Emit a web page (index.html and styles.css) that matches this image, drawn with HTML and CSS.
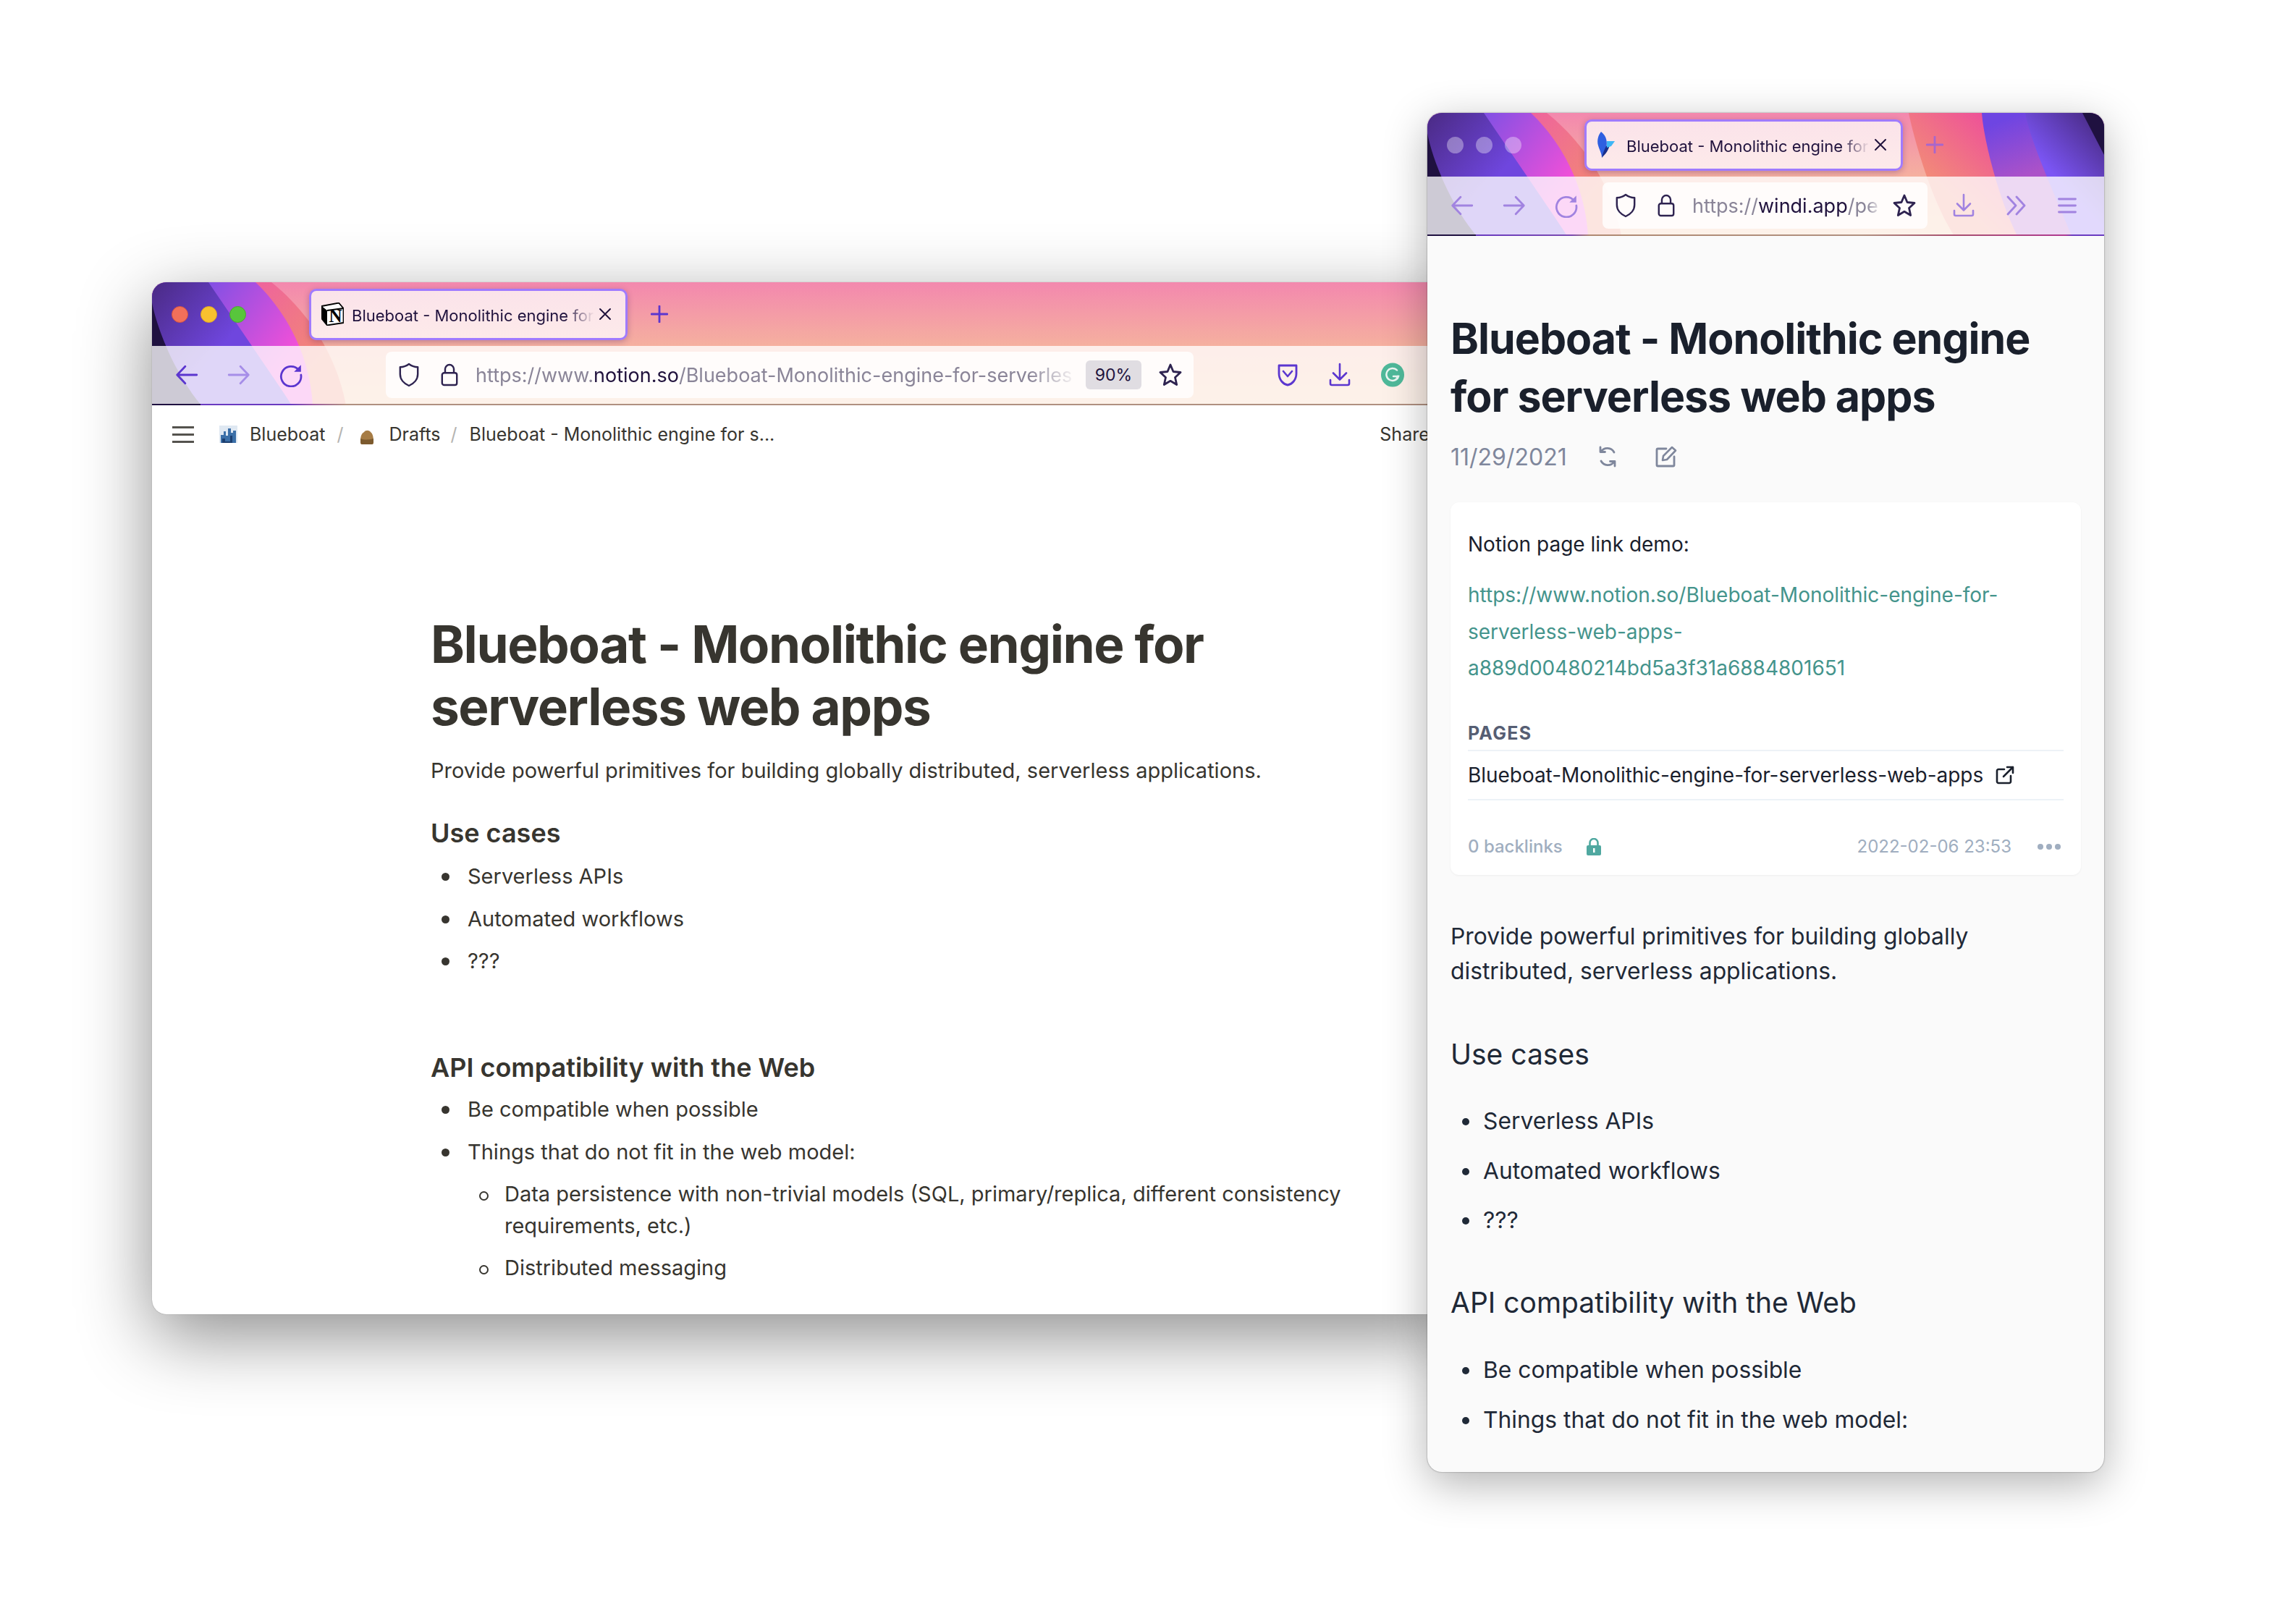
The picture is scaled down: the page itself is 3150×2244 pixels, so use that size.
FILE: index.html
```html
<!DOCTYPE html>
<html lang="en">
<head>
    <meta charset="UTF-8">
    <meta name="viewport" content="width=device-width, initial-scale=1.0">
    <title>Blueboat - two browser windows</title>
    <link rel="stylesheet" href="styles.css">
</head>
<body>

<!-- shared shapes of the browser theme -->
<svg class="defs" width="0" height="0" aria-hidden="true">
    <defs>
        <linearGradient id="gPink" gradientUnits="userSpaceOnUse" x1="120" y1="0" x2="240" y2="110"><stop offset="0" stop-color="#ee5fa2"/><stop offset="1" stop-color="#f28a72"/></linearGradient>
        <linearGradient id="gMagenta" gradientUnits="userSpaceOnUse" x1="80" y1="0" x2="200" y2="90"><stop offset="0" stop-color="#8250e4"/><stop offset="1" stop-color="#f250d8"/></linearGradient>
        <linearGradient id="gIndigo" gradientUnits="userSpaceOnUse" x1="0" y1="0" x2="100" y2="85"><stop offset="0" stop-color="#4a2a84"/><stop offset="1" stop-color="#6f46de"/></linearGradient>
        <linearGradient id="gPinkR" gradientUnits="userSpaceOnUse" x1="130" y1="0" x2="50" y2="85"><stop offset="0" stop-color="#ee5298"/><stop offset="1" stop-color="#f28b78"/></linearGradient>
        <linearGradient id="gPurpleR" gradientUnits="userSpaceOnUse" x1="160" y1="10" x2="190" y2="88"><stop offset="0" stop-color="#6e45e2"/><stop offset="1" stop-color="#ac52c8"/></linearGradient>
        <linearGradient id="gIndigoR" gradientUnits="userSpaceOnUse" x1="300" y1="10" x2="225" y2="80"><stop offset="0" stop-color="#46287e"/><stop offset="1" stop-color="#7b55f4"/></linearGradient>

        <symbol id="swirlLeft" viewBox="0 0 300 170">
            <path d="M165 0C215 40 255 100 268 170L0 170L0 0Z" fill="url(#gPink)"/>
            <path d="M143 0C185 40 218 100 222 170L0 170L0 0Z" fill="url(#gMagenta)"/>
            <path d="M78 0L138 88C158 118 178 146 193 170L0 170L0 0Z" fill="url(#gIndigo)"/>
            <path d="M0 28C6 60 30 125 68 170L0 170Z" fill="#1f1140"/>
        </symbol>
        <symbol id="swirlRight" viewBox="0 0 300 170">
            <path d="M30 0C36 30 60 120 93 170L300 170L300 0Z" fill="url(#gPinkR)"/>
            <path d="M131 0C134 40 155 120 180 170L300 170L300 0Z" fill="url(#gPurpleR)"/>
            <path d="M191 0C198 40 235 120 255 170L300 170L300 0Z" fill="url(#gIndigoR)"/>
            <path d="M270 0L300 58L300 0Z" fill="#1f1140"/>
        </symbol>

        <symbol id="icoBack" viewBox="0 0 32 32"><path d="M29 16H4M14 5L3.500 16L14 27" fill="none" stroke="currentColor" stroke-width="2.600" stroke-linecap="round" stroke-linejoin="round"/></symbol>
        <symbol id="icoForward" viewBox="0 0 32 32"><path d="M3 16H28M18 5L28.500 16L18 27" fill="none" stroke="currentColor" stroke-width="2.600" stroke-linecap="round" stroke-linejoin="round"/></symbol>
        <symbol id="icoReload" viewBox="0 0 32 32"><path d="M26 9.500A13 13 0 1 0 29 16" fill="none" stroke="currentColor" stroke-width="2.600" stroke-linecap="round"/><path d="M29 3V12H20Z" fill="currentColor"/></symbol>
        <symbol id="icoShield" viewBox="0 0 32 36"><path d="M16 2C20 5 25 6.500 29 6.500V17C29 25 23 31 16 34C9 31 3 25 3 17V6.500C7 6.500 12 5 16 2Z" fill="none" stroke="currentColor" stroke-width="2.600" stroke-linejoin="round"/></symbol>
        <symbol id="icoLock" viewBox="0 0 28 36"><rect x="3" y="15" width="22" height="18" rx="3" fill="none" stroke="currentColor" stroke-width="2.600"/><path d="M7.500 15V9.500A6.500 6.500 0 0 1 20.500 9.500V15" fill="none" stroke="currentColor" stroke-width="2.600"/></symbol>
        <symbol id="icoStar" viewBox="0 0 34 34"><path d="M17 3L21 12.500L31 13.500L23.500 20.500L25.700 30.500L17 25.300L8.300 30.500L10.500 20.500L3 13.500L13 12.500Z" fill="none" stroke="currentColor" stroke-width="2.800" stroke-linejoin="round"/></symbol>
        <symbol id="icoDownload" viewBox="0 0 32 34"><path d="M16 2V23M7 14.500L16 23.500L25 14.500M3 24V29C3 30.500 4 31 5 31H27C28 31 29 30.500 29 29V24" fill="none" stroke="currentColor" stroke-width="2.600" stroke-linecap="round" stroke-linejoin="round"/></symbol>
    </defs>
</svg>

<main class="desk">

    <!-- Notion window -->
    <section class="win win-left">
        <header class="chrome">
            <svg class="swirl" width="300" height="170"><use href="#swirlLeft"/></svg>
            <div class="tabrow">
                <div class="lights">
                    <span class="light red"></span>
                    <span class="light yellow"></span>
                    <span class="light green"></span>
                </div>
                <div class="tab">
                    <svg class="favicon" width="31" height="32" viewBox="0 0 31 32">
                        <path d="M0.500 5L24 0.500L30.500 8V28L8 31.500L1 23Z" fill="#fff" stroke="#000" stroke-width="1.800" stroke-linejoin="round"/>
                        <path d="M0.500 5L8 11V31.500L1 23Z" fill="#000"/>
                        <path d="M8 11L30.500 8" stroke="#000" stroke-width="2"/>
                        <text class="notion-n" x="19.500" y="27" text-anchor="middle">N</text>
                    </svg>
                    <span class="tab-title">Blueboat - Monolithic engine for</span>
                    <svg class="tab-close" width="18" height="18" viewBox="0 0 18 18"><path d="M2 2L16 16M16 2L2 16" stroke="currentColor" stroke-width="2" stroke-linecap="round"/></svg>
                </div>
                <svg class="plus" width="24" height="24" viewBox="0 0 24 24"><path d="M12 1V23M1 12H23" stroke="currentColor" stroke-width="2.800" stroke-linecap="round"/></svg>
            </div>
            <div class="toolbar">
                <svg class="tool" width="34" height="34"><use href="#icoBack"/></svg>
                <svg class="tool faded" width="34" height="34"><use href="#icoForward"/></svg>
                <svg class="tool" width="34" height="34"><use href="#icoReload"/></svg>
                <div class="urlbar urlbar-wide">
                    <svg class="shield" width="30" height="34"><use href="#icoShield"/></svg>
                    <svg class="padlock" width="26" height="34"><use href="#icoLock"/></svg>
                    <span class="url">https://www.<b>notion.so</b>/Blueboat-Monolithic-engine-for-serverles</span>
                    <span class="zoomchip">90%</span>
                    <svg class="star" width="34" height="34"><use href="#icoStar"/></svg>
                </div>
                <div class="tools-right">
                    <svg class="tool" width="30" height="34" viewBox="0 0 30 34"><path d="M3 4H27V15C27 24 21 30 15 31C9 30 3 24 3 15Z" fill="none" stroke="currentColor" stroke-width="2.800" stroke-linejoin="round"/><path d="M9 12L15 19L21 12" fill="none" stroke="currentColor" stroke-width="2.600" stroke-linecap="round" stroke-linejoin="round"/></svg>
                    <svg class="tool" width="32" height="34"><use href="#icoDownload"/></svg>
                    <svg class="grammarly" width="32" height="34" viewBox="0 0 32 34"><ellipse cx="16" cy="17" rx="16" ry="16.500" fill="#4fb99a"/><path d="M22 10.500A8.500 8.500 0 1 0 24 19H17" fill="none" stroke="#eaf7f2" stroke-width="2.500" stroke-linecap="round"/><path d="M24 17L24 23L20 20Z" fill="#eaf7f2"/></svg>
                </div>
            </div>
        </header>

        <div class="crumbs">
            <div class="burger"><span></span><span></span><span></span></div>
            <svg class="crumb-ico" width="25" height="24" viewBox="0 0 25 24">
                <rect width="25" height="24" fill="#dfe8f2"/>
                <path d="M2 24V13H6V8H9V14H12V4H16V10H19V7H23V24Z" fill="#3b6fa8"/>
                <path d="M4 24V18H8V22H15V14H18V24Z" fill="#1c3f70"/>
            </svg>
            <span class="crumb">Blueboat</span>
            <span class="sep">/</span>
            <svg class="crumb-ico draft" width="20" height="22" viewBox="0 0 20 22">
                <path d="M3 22C1 22 1 20 1 18C1 12 2 7 6 5C8 2 13 2 15 5C18 7 19 12 19 18C19 20 19 22 17 22Z" fill="#a67c45"/>
                <path d="M1 14C6 16 14 16 19 14V18C19 22 17 22 16 22H4C3 22 1 22 1 18Z" fill="#7c5a2e"/>
            </svg>
            <span class="crumb">Drafts</span>
            <span class="sep sep-tight">/</span>
            <span class="crumb">Blueboat - Monolithic engine for s...</span>
            <span class="share">Share</span>
        </div>

        <article class="notion">
            <h1>Blueboat - Monolithic engine for serverless web apps</h1>
            <p>Provide powerful primitives for building globally distributed, serverless applications.</p>
            <h3 class="first">Use cases</h3>
            <ul>
                <li>Serverless APIs</li>
                <li>Automated workflows</li>
                <li>???</li>
            </ul>
            <h3 class="second">API compatibility with the Web</h3>
            <ul>
                <li>Be compatible when possible</li>
                <li>Things that do not fit in the web model:
                    <ul>
                        <li>Data persistence with non-trivial models (SQL, primary/replica, different consistency requirements, etc.)</li>
                        <li>Distributed messaging</li>
                    </ul>
                </li>
            </ul>
        </article>
    </section>

    <!-- Blueboat blog window -->
    <section class="win win-right">
        <header class="chrome">
            <svg class="swirl" width="300" height="170"><use href="#swirlLeft"/></svg>
            <svg class="swirl swirl-r" width="300" height="170"><use href="#swirlRight"/></svg>
            <div class="tabrow">
                <div class="lights">
                    <span class="light idle"></span>
                    <span class="light idle"></span>
                    <span class="light idle"></span>
                </div>
                <div class="tab">
                    <svg class="favicon" width="30" height="36" viewBox="0 0 30 36">
                        <path d="M6 0C14 6 15 15 13 23C11 29 8 33 7 36C7 30 4 26 2 19C0 12 2 5 6 0Z" fill="#2f5fe0"/>
                        <path d="M7 36C8 30 11 24 13 20L18 17C17 25 12 31 7 36Z" fill="#1a2f8a"/>
                        <path d="M14 13L25 13L20 20L14 22Z" fill="#3fb6f5"/>
                    </svg>
                    <span class="tab-title">Blueboat - Monolithic engine for</span>
                    <svg class="tab-close" width="18" height="18" viewBox="0 0 18 18"><path d="M2 2L16 16M16 2L2 16" stroke="currentColor" stroke-width="2" stroke-linecap="round"/></svg>
                </div>
                <svg class="plus dim" width="24" height="24" viewBox="0 0 24 24"><path d="M12 1V23M1 12H23" stroke="currentColor" stroke-width="2.800" stroke-linecap="round"/></svg>
            </div>
            <div class="toolbar">
                <svg class="tool dim" width="34" height="34"><use href="#icoBack"/></svg>
                <svg class="tool dim" width="34" height="34"><use href="#icoForward"/></svg>
                <svg class="tool dim" width="34" height="34"><use href="#icoReload"/></svg>
                <div class="urlbar urlbar-short">
                    <svg class="shield" width="30" height="34"><use href="#icoShield"/></svg>
                    <svg class="padlock" width="26" height="34"><use href="#icoLock"/></svg>
                    <span class="url">https://<b>windi.app</b>/pe</span>
                    <svg class="star" width="34" height="34"><use href="#icoStar"/></svg>
                </div>
                <div class="tools-right">
                    <svg class="tool dim" width="32" height="34"><use href="#icoDownload"/></svg>
                    <svg class="tool dim" width="30" height="30" viewBox="0 0 30 30"><path d="M3 3L14 15L3 27M15 3L26 15L15 27" fill="none" stroke="currentColor" stroke-width="2.800" stroke-linecap="round" stroke-linejoin="round"/></svg>
                    <svg class="tool dim" width="26" height="22" viewBox="0 0 26 22"><path d="M1.500 2H24.500M1.500 11H24.500M1.500 20H24.500" stroke="currentColor" stroke-width="2.800" stroke-linecap="round"/></svg>
                </div>
            </div>
        </header>

        <article class="post">
            <h1>Blueboat - Monolithic engine for serverless web apps</h1>
            <div class="meta">
                <span class="meta-date">11/29/2021</span>
                <svg class="meta-ico" width="28" height="30" viewBox="0 0 28 30"><path d="M23 9A10.500 10.500 0 0 0 5 8M5 21A10.500 10.500 0 0 0 23 22M4 2V8.500H10.500M24 28V21.500H17.500" fill="none" stroke="currentColor" stroke-width="2.800" stroke-linecap="round" stroke-linejoin="round"/></svg>
                <svg class="meta-ico edit" width="30" height="30" viewBox="0 0 30 30"><path d="M15 4H3.500C2.500 4 2 4.500 2 5.500V26.500C2 27.500 2.500 28 3.500 28H24.500C25.500 28 26 27.500 26 26.500V15" fill="none" stroke="currentColor" stroke-width="2.800" stroke-linecap="round"/><path d="M10 20L11 14L23 2L28 6.500L16 19Z" fill="none" stroke="currentColor" stroke-width="2.600" stroke-linejoin="round"/></svg>
            </div>

            <div class="card">
                <div class="card-note">Notion page link demo:</div>
                <a class="card-link">https://www.notion.so/Blueboat-Monolithic-engine-for-serverless-web-apps-a889d00480214bd5a3f31a6884801651</a>
                <div class="card-label">PAGES</div>
                <div class="card-page">
                    <span>Blueboat-Monolithic-engine-for-serverless-web-apps</span>
                    <svg width="26" height="26" viewBox="0 0 26 26"><path d="M12 5H4C3 5 2 6 2 7V22C2 23 3 24 4 24H19C20 24 21 23 21 22V14" fill="none" stroke="currentColor" stroke-width="2.600" stroke-linecap="round"/><path d="M11 15L24 2M16 2H24V10" fill="none" stroke="currentColor" stroke-width="2.600" stroke-linecap="round" stroke-linejoin="round"/></svg>
                </div>
                <div class="card-foot">
                    <span class="backlinks">0 backlinks</span>
                    <svg class="foot-lock" width="20" height="24" viewBox="0 0 20 24"><path d="M4.500 11V6.500A5.500 5.500 0 0 1 15.500 6.500V11" fill="none" stroke="currentColor" stroke-width="2.600"/><rect x="0" y="10" width="20" height="14" rx="2" fill="currentColor"/><rect x="9" y="14" width="2.500" height="6" fill="#fff"/></svg>
                    <span class="foot-date">2022-02-06 23:53</span>
                    <span class="dots"><i></i><i></i><i></i></span>
                </div>
            </div>

            <p>Provide powerful primitives for building globally distributed, serverless applications.</p>
            <h2 class="first">Use cases</h2>
            <ul>
                <li>Serverless APIs</li>
                <li>Automated workflows</li>
                <li>???</li>
            </ul>
            <h2 class="second">API compatibility with the Web</h2>
            <ul>
                <li>Be compatible when possible</li>
                <li>Things that do not fit in the web model:</li>
            </ul>
        </article>
    </section>

</main>

</body>
</html>
```

FILE: styles.css
```css
* {
    box-sizing: border-box;
}
body {
    margin: 0;
    background-color: #fff;
    font-family: Inter, "Noto Sans", sans-serif;
}
.defs {
    position: absolute;
}
.desk {
    position: relative;
    width: 3150px;
    height: 2244px;
    overflow: hidden;
}

/* Windows sit on a free canvas */
.win {
    position: absolute;
    display: flex;
    flex-direction: column;
    overflow: hidden;
    border-radius: 20px;
}
.win-left {
    left: 210px;
    top: 390px;
    width: 1800px;
    height: 1426px;
    background-color: #fff;
    box-shadow: 0 30px 100px rgba(0, 0, 0, 0.45), 0 0 1px rgba(0, 0, 0, 0.5);
}
.win-right {
    left: 1972px;
    top: 156px;
    width: 935px;
    height: 1878px;
    background-color: #fafafa;
    box-shadow: 0 16px 60px rgba(0, 0, 0, 0.3), 0 0 2px rgba(0, 0, 0, 0.5);
}

/* Browser chrome */
.chrome {
    position: relative;
    flex-shrink: 0;
    background: linear-gradient(to bottom, #f388ae 0, #f5b09f 88px, #f7c39a 170px);
}
.swirl {
    position: absolute;
    left: 0;
    top: 0;
}
.swirl-r {
    left: auto;
    right: 0;
}
.tabrow {
    position: relative;
    display: flex;
    align-items: center;
    height: 88px;
    padding-left: 27px;
}
.lights {
    display: flex;
    gap: 17px;
    width: 190px;
}
.light {
    width: 23px;
    height: 23px;
    border-radius: 50%;
}
.red {
    background-color: #f2705a;
    border: 1px solid #d9543f;
}
.yellow {
    background-color: #f8c12f;
    border: 1px solid #dfa524;
}
.green {
    background-color: #58c53c;
    border: 1px solid #46a92d;
}
.idle {
    background-color: rgba(255, 255, 255, 0.35);
}
.tab {
    display: flex;
    align-items: center;
    width: 440px;
    height: 71px;
    padding: 0 19px 0 14px;
    border: 3px solid #a07bff;
    border-radius: 10px;
    background: linear-gradient(to bottom, #fbe3ea, #fdeaea);
    box-shadow: 0 2px 8px rgba(60, 20, 100, 0.3);
    color: #20123d;
}
.favicon {
    flex-shrink: 0;
}
.notion-n {
    font-family: "Liberation Serif", serif;
    font-size: 25px;
    font-weight: 700;
    fill: #000;
}
.tab-title {
    flex: 1;
    min-width: 0;
    margin-left: 11px;
    padding-top: 3px;
    overflow: hidden;
    white-space: nowrap;
    font-size: 22px;
    -webkit-mask-image: linear-gradient(to right, #000 88%, transparent 100%);
    mask-image: linear-gradient(to right, #000 88%, transparent 100%);
}
.tab-close {
    flex-shrink: 0;
    margin-left: 6px;
}
.plus {
    margin-left: 32px;
    color: #5b36cf;
}

.toolbar {
    position: relative;
    display: flex;
    align-items: center;
    height: 82px;
    padding-left: 31px;
    gap: 38px;
    background-color: rgba(255, 255, 255, 0.78);
    background-clip: padding-box;
    border-bottom: 2px solid;
    border-image: linear-gradient(to right, #1f1140 0, #1f1140 68px, #6a3bc0 68px, #6a3bc0 193px, #9a5aa0 222px, #b09080 268px, #b09080 100%) 1;
}
.win-right .toolbar {
    border-image: linear-gradient(to right, #1f1140 0, #1f1140 68px, #6a3bc0 68px, #7a4ab0 200px, #b08a72 225px, #b09080 600px, #a8506f 725px, #b03a90 880px, #6a3bc0 890px, #6a3bc0 100%) 1;
}
.tool {
    flex-shrink: 0;
    color: #5b36cf;
}
.faded {
    color: #a68ee8;
}
.dim {
    color: #a183e0;
}
.plus.dim {
    color: #a866cc;
}
.urlbar {
    display: flex;
    align-items: center;
    flex-shrink: 0;
    height: 64px;
    border-radius: 8px;
    background-color: rgba(255, 255, 255, 0.8);
    color: #2e2350;
}
.urlbar-wide {
    width: 1116px;
    margin-left: 76px;
}
.urlbar-short {
    width: 449px;
    margin-left: -5px;
}
.shield {
    flex-shrink: 0;
    margin-left: 17px;
}
.padlock {
    flex-shrink: 0;
    margin-left: 28px;
}
.url {
    flex: 1;
    min-width: 0;
    margin-left: 23px;
    overflow: hidden;
    white-space: nowrap;
    font-size: 27px;
    color: #8a8598;
    -webkit-mask-image: linear-gradient(to right, #000 92%, transparent 100%);
    mask-image: linear-gradient(to right, #000 92%, transparent 100%);
}
.url b {
    font-weight: 400;
    color: #20123d;
}
.zoomchip {
    flex-shrink: 0;
    width: 77px;
    height: 40px;
    margin-left: 12px;
    border-radius: 6px;
    background-color: #e0dde2;
    color: #20123d;
    font-size: 23px;
    line-height: 40px;
    text-align: center;
}
.star {
    flex-shrink: 0;
    margin: 0 15px 0 23px;
}
.urlbar-short .star {
    margin: 0 15px 0 14px;
}
.tools-right {
    display: flex;
    align-items: center;
    gap: 41px;
    margin-left: 77px;
}
.win-right .tools-right {
    gap: 42px;
    margin-left: -4px;
}

/* Notion page */
.crumbs {
    display: flex;
    align-items: center;
    flex-shrink: 0;
    height: 80px;
    padding-left: 28px;
    font-size: 25px;
    color: #37352f;
}
.burger {
    display: flex;
    flex-direction: column;
    gap: 7px;
    width: 30px;
    margin-right: 35px;
}
.burger span {
    height: 3px;
    background-color: #55534e;
}
.crumb-ico {
    flex-shrink: 0;
    margin-right: 17px;
}
.crumb-ico.draft {
    margin-right: 21px;
    margin-top: 6px;
}
.sep {
    margin: 0 22px 0 16px;
    color: #b5b4b1;
}
.sep-tight {
    margin: 0 17px 0 14px;
}
.share {
    margin-left: 836px;
}
.notion {
    padding: 207px 0 0 385px;
    width: 1675px;
    color: #37352f;
}
.notion h1 {
    margin: 0;
    font-size: 71px;
    line-height: 86px;
    font-weight: 700;
    letter-spacing: -0.02em;
}
.notion p {
    margin: 24px 0 0;
    font-size: 29px;
    line-height: 44px;
}
.notion h3 {
    margin: 0;
    font-size: 36px;
    line-height: 48px;
    font-weight: 600;
}
.notion h3.first {
    margin-top: 40px;
}
.notion h3.second {
    margin-top: 101px;
}
.notion ul {
    margin: 14px 0 0;
    padding: 0 0 0 51px;
    list-style: none;
}
.notion h3.second + ul {
    margin-top: 12px;
}
.notion li {
    position: relative;
    margin-bottom: 14.500px;
    font-size: 29px;
    line-height: 44px;
}
.notion li::before {
    content: "";
    position: absolute;
    left: -36px;
    top: 17px;
    width: 11px;
    height: 11px;
    border-radius: 50%;
    background-color: #37352f;
}
.notion li:last-child {
    margin-bottom: 0;
}
.notion li li {
    margin-bottom: 14.500px;
}
.notion li li::before {
    left: -35px;
    top: 18px;
    width: 9px;
    height: 9px;
    background-color: transparent;
    border: 2px solid #37352f;
}

/* Blog post */
.post {
    padding: 102px 32px 0;
    color: #1f2937;
}
.post h1 {
    margin: 0;
    font-size: 59px;
    line-height: 80px;
    font-weight: 700;
    letter-spacing: -1px;
    color: #1a202c;
}
.meta {
    display: flex;
    align-items: center;
    height: 48px;
    margin-top: 19px;
    color: #7f879c;
}
.meta-date {
    font-size: 32px;
}
.meta-ico {
    margin-left: 42px;
}
.meta-ico.edit {
    margin-left: 52px;
}
.card {
    margin-top: 39px;
    height: 515px;
    padding: 38px 24px 0;
    border-radius: 12px;
    background-color: #fff;
    box-shadow: 0 1px 3px rgba(0, 0, 0, 0.05);
    color: #1a202c;
}
.card-note {
    font-size: 28px;
    line-height: 40px;
}
.card-link {
    display: block;
    margin-top: 25px;
    width: 740px;
    font-size: 28px;
    line-height: 50.500px;
    color: #44948c;
    overflow-wrap: anywhere;
}
.card-label {
    margin-top: 48px;
    font-size: 25px;
    line-height: 32px;
    font-weight: 700;
    letter-spacing: 0.05em;
    color: #565e73;
}
.card-page {
    display: flex;
    align-items: center;
    height: 70px;
    margin-top: 7px;
    border-top: 2px solid #edf2f7;
    border-bottom: 2px solid #edf2f7;
    font-size: 28px;
}
.card-page span {
    letter-spacing: -0.05px;
}
.card-page svg {
    margin-left: 17px;
}
.card-foot {
    display: flex;
    align-items: center;
    height: 40px;
    margin-top: 44px;
    font-size: 24px;
    color: #a0aec0;
}
.backlinks {
    font-weight: 500;
}
.foot-lock {
    margin-left: 33px;
    color: #4fa8a0;
}
.foot-date {
    margin-left: auto;
}
.dots {
    display: flex;
    gap: 4px;
    margin: 0 4px 0 36px;
}
.dots i {
    width: 8px;
    height: 8px;
    border-radius: 50%;
    background-color: #a0aec0;
}
.post p {
    margin: 61px 0 0;
    font-size: 31.800px;
    line-height: 48px;
}
.post h2 {
    margin: 0;
    font-size: 39px;
    line-height: 56px;
    font-weight: 400;
}
.post h2.first {
    margin-top: 63px;
}
.post h2.second {
    margin-top: 62px;
}
.post ul {
    margin: 40px 0 0;
    padding: 0 0 0 45px;
    list-style: none;
}
.post h2.second + ul {
    margin-top: 41px;
}
.post li {
    position: relative;
    margin-bottom: 20.500px;
    font-size: 31.800px;
    line-height: 48px;
}
.post li::before {
    content: "";
    position: absolute;
    left: -29px;
    top: 20px;
    width: 10px;
    height: 10px;
    border-radius: 50%;
    background-color: #1f2937;
}
```
